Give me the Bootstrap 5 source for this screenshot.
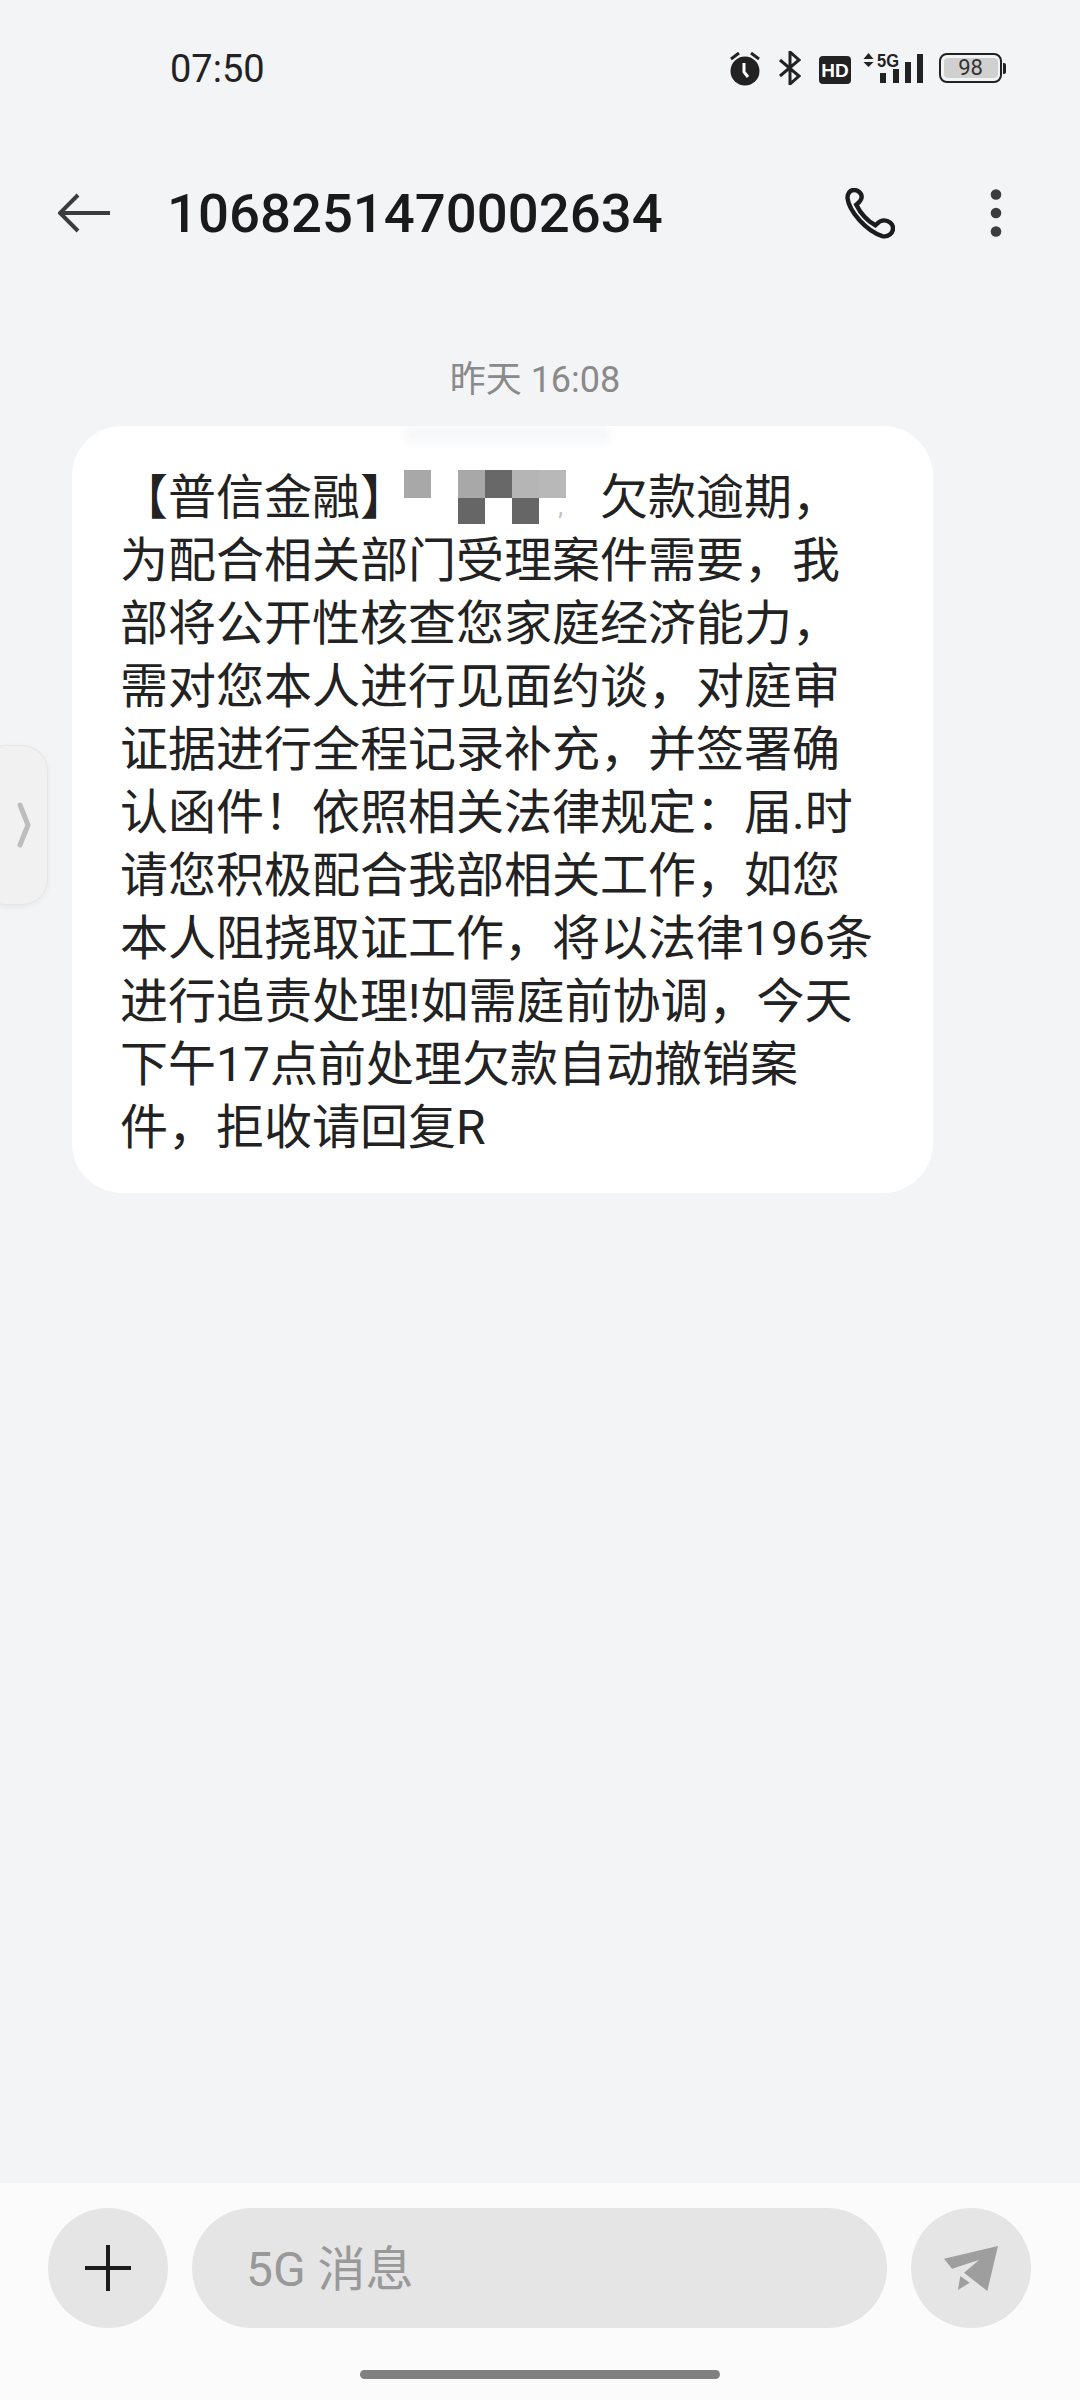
<!DOCTYPE html>
<html lang="zh-CN">
<head>
    <meta charset="UTF-8">
    <meta name="viewport" content="width=device-width, initial-scale=1.0">
    <title>1068251470002634</title>
    <link href="https://cdn.jsdelivr.net/npm/bootstrap@5.3.0/dist/css/bootstrap.min.css" rel="stylesheet">
    <style>
        html, body {
            height: 2400px;
            overflow: hidden;
        }
        body {
            background-color: #f3f4f6;
            color: #1c1c1c;
            font-family: "Roboto", "Noto Sans CJK SC", sans-serif;
        }
        .phone-screen {
            height: 2400px;
            width: 1080px;
        }
        .status-row {
            height: 136px;
            padding: 0 74px 0 170px;
        }
        .clock-text {
            font-size: 38px;
            font-weight: 400;
            line-height: 1;
            color: #222;
            margin-top: 2px;
        }
        .ico-alarm { margin-top: 2px; }
        .ico-bt { margin-left: 19px; }
        .ico-hd { margin-left: 18px; margin-top: 3px; }
        .ico-net { margin-left: 12px; overflow: visible; }
        .batt-box {
            width: 63px;
            height: 30px;
            border: 2.5px solid #222;
            border-radius: 8px;
            padding: 2.5px;
            margin-left: 16px;
        }
        .batt-fill {
            background-color: #d0d0d0;
            border-radius: 4px;
            font-size: 22px;
            line-height: 20px;
            color: #333;
        }
        .batt-nub {
            width: 3px;
            height: 11px;
            background: #222;
            border-radius: 0 2px 2px 0;
            margin-left: 1px;
        }
        .title-row {
            height: 154px;
            padding: 0 78px 0 58px;
        }
        .title-num {
            font-size: 54.5px;
            font-weight: 500;
            line-height: 1;
            margin-left: 57px;
            color: #1a1a1a;
        }
        .phone-ico {
            margin-right: 95px;
        }
        .stamp-text {
            height: 56px;
            margin-top: 62px;
            margin-bottom: 18px;
            font-size: 36px;
            line-height: 56px;
            color: #8a8a8a;
            padding-right: 10px;
        }
        .msg-bubble {
            width: 861px;
            height: 767px;
            margin-left: 72px;
            padding: 40px 20px 0 48px;
            background: #fff;
            border-radius: 50px;
            font-size: 48px;
            line-height: 63px;
            color: #222;
            white-space: nowrap;
            position: relative;
        }
        .msg-smudge {
            position: absolute;
            left: 332px;
            top: 0;
            width: 207px;
            height: 16px;
            background: #f3f4f6;
            filter: blur(5px);
            opacity: .7;
        }
        .mosaic-gap {
            display: inline-block;
            width: 192px;
        }
        .mosaic-wrap {
            position: absolute;
            left: 332px;
            top: 44px;
            display: grid;
            grid-template-columns: repeat(6, 27px);
            grid-template-rows: 28px 26px;
        }
        .mosaic-wrap i {
            display: block;
        }
        .mosaic-comma {
            position: absolute;
            left: 154px;
            top: 16px;
            font-size: 26px;
            line-height: 40px;
            color: #c4c4c4;
        }
        .side-handle {
            position: absolute;
            left: -20px;
            top: 745px;
            width: 68px;
            height: 160px;
            background: #f1f1f2;
            border: 1px solid #e6e6e8;
            border-radius: 26px;
            box-shadow: 0 2px 6px rgba(0, 0, 0, .05);
        }
        .composer {
            height: 217px;
            background: #fbfbfb;
            padding: 25px 49px 0 48px;
            gap: 24px;
        }
        .round-btn {
            width: 120px;
            height: 120px;
            flex: none;
            background: #e5e5e5;
            border-radius: 50%;
        }
        .msg-field {
            height: 120px;
            background: #e5e5e5;
            border-radius: 60px;
            padding-left: 54px;
            padding-top: 4px;
            font-size: 48px;
            color: #999;
        }
        .home-bar {
            width: 360px;
            height: 9px;
            background: #808080;
            border-radius: 5px;
            position: absolute;
            left: 360px;
            top: 2370px;
        }
    </style>
</head>
<body>
    <div class="phone-screen position-relative d-flex flex-column">
        <div class="status-row d-flex align-items-center justify-content-between">
            <span class="clock-text">07:50</span>
            <div class="d-flex align-items-center">
                <svg class="ico-alarm" width="30" height="34" viewBox="0 0 30 34"><circle cx="15" cy="19" r="14.5" fill="#222"/><path d="M14 11v9l4 5" fill="none" stroke="#fff" stroke-width="3"/><path d="M1 7l8-6M29 7l-8-6" stroke="#222" stroke-width="3"/></svg>
                <svg class="ico-bt" width="22" height="34" viewBox="0 0 22 34"><path d="M1 9l19 16-9 8V1l9 8L1 25" fill="none" stroke="#222" stroke-width="3"/></svg>
                <svg class="ico-hd" width="32" height="28" viewBox="0 0 32 28"><rect width="32" height="28" rx="4" fill="#222"/><text x="16" y="21" text-anchor="middle" font-family="Liberation Sans" font-weight="700" font-size="19" fill="#fff">HD</text></svg>
                <svg class="ico-net" width="60" height="30" viewBox="0 0 60 30"><path d="M5.5 0l5 6H.5zM5.5 14l5-5H.5z" fill="#222"/><text x="14" y="14" font-family="Liberation Sans" font-weight="700" font-size="19" fill="#222" textLength="22" lengthAdjust="spacingAndGlyphs">5G</text><rect x="17" y="20" width="6" height="10" fill="#222"/><rect x="30" y="16" width="6" height="14" fill="#222"/><rect x="42" y="9" width="6" height="21" fill="#222"/><rect x="54" y="1" width="6" height="29" fill="#222"/></svg>
                <div class="d-flex align-items-center">
                    <div class="batt-box"><div class="batt-fill text-center">98</div></div>
                    <div class="batt-nub"></div>
                </div>
            </div>
        </div>

        <div class="title-row d-flex align-items-center">
            <svg width="52" height="40" viewBox="0 0 52 40"><path d="M20 2L2 20l18 18M2 20h50" fill="none" stroke="#3c3c3c" stroke-width="4"/></svg>
            <span class="title-num flex-grow-1">1068251470002634</span>
            <svg class="phone-ico" width="50" height="51" viewBox="0 0 51 52"><path d="M2.5 10C4 24 22 44 38 49c6 1.500 11-3 11-8 0-5-5-8-9-8-5 0-7 3-9 5-9-5-16-14-19.500-21C14 15 17 13 17 9c0-4-4-7-8-7S2.500 6 2.500 10z" fill="none" stroke="#1c1c1c" stroke-width="4.500"/></svg>
            <svg width="12" height="50" viewBox="0 0 12 50"><circle cx="6" cy="6.500" r="5.300" fill="#3c3c3c"/><circle cx="6" cy="25" r="5.300" fill="#3c3c3c"/><circle cx="6" cy="43.500" r="5.300" fill="#3c3c3c"/></svg>
        </div>

        <div class="stamp-text text-center">昨天 16:08</div>

        <div class="msg-bubble">
            <span class="msg-smudge"></span>
            <div class="mosaic-wrap">
                <i style="background:#a8a8a8"></i><i></i><i style="background:#a8a8a8"></i><i style="background:#686868"></i><i style="background:#b5b5b5"></i><i style="background:#b8b8b8"></i>
                <i></i><i></i><i style="background:#666"></i><i></i><i style="background:#666"></i><i></i>
                <span class="mosaic-comma">,</span>
            </div>
            【普信金融】<span class="mosaic-gap"></span>欠款逾期，<br>
            为配合相关部门受理案件需要，我<br>
            部将公开性核查您家庭经济能力，<br>
            需对您本人进行见面约谈，对庭审<br>
            证据进行全程记录补充，并签署确<br>
            认函件！依照相关法律规定：届.时<br>
            请您积极配合我部相关工作，如您<br>
            本人阻挠取证工作，将以法律196条<br>
            进行追责处理!如需庭前协调，今天<br>
            下午17点前处理欠款自动撤销案<br>
            件，拒收请回复R
        </div>

        <div class="side-handle d-flex align-items-center justify-content-end">
            <svg class="me-3" width="14" height="46" viewBox="0 0 14 46"><path d="M3 3l8 20-8 20" fill="none" stroke="#bdbdbd" stroke-width="5" stroke-linecap="round" stroke-linejoin="round"/></svg>
        </div>

        <div class="composer d-flex mt-auto">
            <div class="round-btn d-flex align-items-center justify-content-center">
                <svg width="46" height="46" viewBox="0 0 46 46"><path d="M0 23h46M23 0v46" stroke="#1c1c1c" stroke-width="4"/></svg>
            </div>
            <div class="msg-field flex-grow-1 d-flex align-items-center">5G 消息</div>
            <div class="round-btn d-flex align-items-center justify-content-center">
                <svg width="54" height="45" viewBox="0 0 54 45"><path d="M54 0L0 12.700l8 10L35 14 20 26.700 43.300 45zM16.300 30L14 44l11.700-7.300z" fill="#9e9e9e"/></svg>
            </div>
        </div>
        <div class="home-bar"></div>
    </div>
    <script src="https://cdn.jsdelivr.net/npm/bootstrap@5.3.0/dist/js/bootstrap.bundle.min.js"></script>
</body>
</html>
